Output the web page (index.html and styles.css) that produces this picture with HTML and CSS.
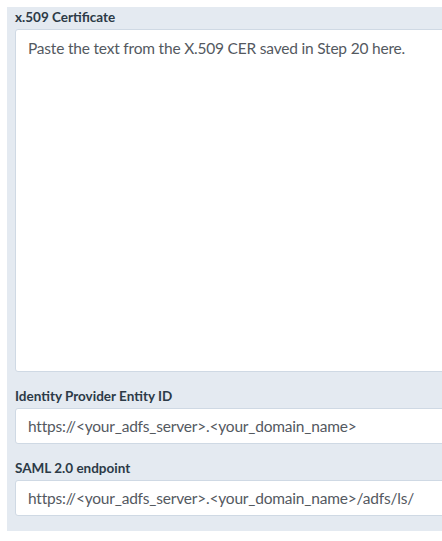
FILE: index.html
```html
<!DOCTYPE html>
<html>
<head>
<meta charset="utf-8">
<link rel="stylesheet" href="styles.css">
</head>
<body>
<div class="page">
  <div class="panel">
    <div class="field">
      <label class="label">x.509 Certificate</label>
      <div class="textarea">Paste the text from the X.509 CER saved in Step 20 here.</div>
    </div>
    <div class="field">
      <label class="label">Identity Provider Entity ID</label>
      <div class="input">https://&lt;your_adfs_server&gt;.&lt;your_domain_name&gt;</div>
    </div>
    <div class="field">
      <label class="label">SAML 2.0 endpoint</label>
      <div class="input">https://&lt;your_adfs_server&gt;.&lt;your_domain_name&gt;/adfs/ls/</div>
    </div>
  </div>
</div>
</body>
</html>
```

FILE: styles.css
```css
html, body {
  margin: 0;
  padding: 0;
  background: #ffffff;
  overflow: hidden;
}
body {
  font-family: Lato, "Liberation Sans", sans-serif;
}
.page {
  padding: 7px 0 0 7px;
  width: 480px;
}
.panel {
  background: #e4eaf1;
  padding: 0 0 15px 8px;
  display: flex;
  flex-direction: column;
  gap: 14px;
}
.field {
  display: flex;
  flex-direction: column;
}
.label {
  font-size: 13.5px;
  font-weight: 700;
  line-height: 20px;
  color: #2c3a47;
  margin-bottom: 2px;
}
.textarea, .input {
  background: #ffffff;
  border: 1px solid #cfd9e4;
  border-radius: 3px;
  color: #54595f;
  font-size: 15.5px;
  letter-spacing: -0.2px;
  box-sizing: border-box;
}
.textarea {
  height: 343px;
  padding: 8px 12px;
  line-height: 20px;
}
.input {
  height: 36px;
  padding: 0 12px;
  line-height: 34px;
}
```
